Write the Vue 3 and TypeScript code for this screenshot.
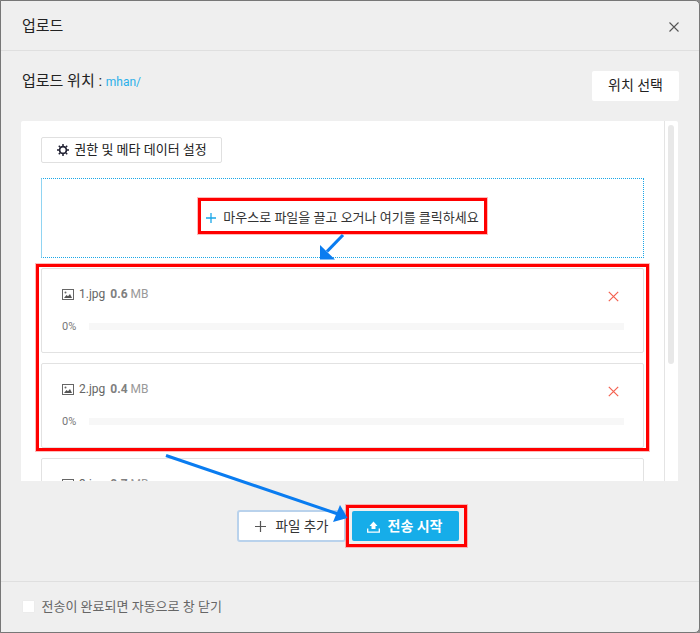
<script setup lang="ts">
interface UploadFile { name: string; size: string }
const files: UploadFile[] = [
  { name: '1.jpg', size: '0.6' },
  { name: '2.jpg', size: '0.4' },
  { name: '3.jpg', size: '0.7' },
]
</script>

<template>
  <div class="modal">
    <header class="head">
      <h1 class="title">업로드</h1>
      <svg class="close" width="12" height="12" viewBox="0 0 12 12"><path d="M1.500 1.500l9 9M10.500 1.500l-9 9" stroke="#555" stroke-width="1.100" fill="none" /></svg>
    </header>

    <div class="body">
      <div class="location">
        <div class="loc-text">업로드 위치 : <span class="path">mhan/</span></div>
        <button class="pick">위치 선택</button>
      </div>

      <div class="panel">
        <div class="scroll">
          <button class="settings">
            <svg width="14" height="14" viewBox="0 0 14 14"><circle cx="7" cy="7" r="3.400" fill="none" stroke="#223" stroke-width="1.700" /><path d="M7 1v2M7 11v2M1 7h2M11 7h2M2.800 2.800l1.400 1.400M9.800 9.800l1.400 1.400M11.200 2.800L9.800 4.200M4.200 9.800l-1.400 1.400" stroke="#223" stroke-width="1.500" /></svg>
            권한 및 메타 데이터 설정
          </button>

          <div class="drop">
            <svg width="10" height="10" viewBox="0 0 10 10"><path d="M5 0v10M0 5h10" stroke="#1aa7e8" stroke-width="1.300" /></svg>
            <span>마우스로 파일을 끌고 오거나 여기를 클릭하세요</span>
          </div>

          <div v-for="f in files" :key="f.name" class="item">
            <div class="item-top">
              <svg width="12" height="11" viewBox="0 0 12 11"><rect x="0.500" y="0.500" width="11" height="10" fill="none" stroke="#666" /><circle cx="3.500" cy="3.500" r="1" fill="#666" /><path d="M2 9l2.500-3 1.500 1.200L8 5l2 4z" fill="#555" /></svg>
              <span class="fname">{{ f.name }}</span>
              <span class="fsize"><b>{{ f.size }}</b> MB</span>
              <svg class="remove" width="11" height="11" viewBox="0 0 11 11"><path d="M.8.8l9.400 9.400M10.200.8L.8 10.200" stroke="#f4604f" stroke-width="1.200" fill="none" /></svg>
            </div>
            <div class="progress">
              <span class="pct">0%</span>
              <div class="bar"></div>
            </div>
          </div>
        </div>
        <div class="track"><div class="thumb"></div></div>
      </div>

      <div class="actions">
        <button class="add">
          <svg width="11" height="11" viewBox="0 0 11 11"><path d="M5.500 0v11M0 5.500h11" stroke="#555" stroke-width="1.200" /></svg>
          파일 추가
        </button>
        <button class="start">
          <svg width="13" height="13" viewBox="0 0 13 13"><path d="M6.500 1.500L10.500 6H8.500v3h-4V6H2.500z" fill="#fff" /><path d="M.7 8.500v3.600h11.600V8.500" fill="none" stroke="#fff" stroke-width="1.300" /></svg>
          전송 시작
        </button>
      </div>
    </div>

    <footer class="foot">
      <span class="check"></span>
      <span class="foot-text">전송이 완료되면 자동으로 창 닫기</span>
    </footer>

    <div class="mark mark-a"></div>
    <div class="mark mark-b"></div>
    <div class="mark mark-c"></div>
    <svg class="arrows" width="700" height="633" viewBox="0 0 700 633">
      <path d="M343 235L327 251.500" stroke="#0a7cf0" stroke-width="3.200" fill="none" />
      <path d="M320 259.500L320 245L335 259.500z" fill="#0a7cf0" />
      <path d="M166 455.500L338 514" stroke="#0a7cf0" stroke-width="3" fill="none" />
      <path d="M347.500 518L333 522L340 505z" fill="#0a7cf0" />
    </svg>
    <div class="edge"></div>
  </div>
</template>

<style>
html, body { margin: 0; padding: 0; background: #8a8a8a; }
</style>

<style scoped>
* { box-sizing: border-box; }
.modal {
  position: relative;
  width: 700px;
  height: 633px;
  background: #efefef;
  border: 1px solid #777;
  border-radius: 0 5px 5px 0;
  display: flex;
  flex-direction: column;
  overflow: hidden;
  color: #222;
  font-family: Roboto, "Noto Sans CJK KR", sans-serif;
  font-size: 12px;
}
.edge { position: absolute; left: -1px; top: 36px; width: 1px; height: 32px; background: #1d2a4a; }
.head {
  height: 50px;
  flex: none;
  border-bottom: 1px solid #dfdfdf;
  display: flex;
  align-items: center;
  justify-content: space-between;
  padding: 0 19px 0 21px;
}
.title { margin: 0 0 3px; font-size: 15px; font-weight: 400; color: #222; }
.close { margin-top: 2px; }
.body { flex: 1; min-height: 0; padding: 20px 20px 0; }
.location { display: flex; justify-content: space-between; align-items: flex-start; height: 50px; }
.loc-text { font-size: 15px; line-height: 20px; padding-left: 1px; }
.path { color: #2bb0ea; font-size: 12px; }
.pick {
  width: 87px;
  height: 30px;
  border: 0;
  border-radius: 2px;
  background: #fff;
  color: #222;
  font: inherit;
  font-size: 14px;
  padding: 0 0 4px;
}
.panel { display: flex; height: 360px; width: 657px; background: #fff; overflow: hidden; border-radius: 2px 2px 0 0; }
.scroll { width: 643px; flex: none; padding: 16px 20px 0; overflow: hidden; }
.settings {
  display: flex;
  align-items: center;
  justify-content: center;
  gap: 4px;
  width: 181px;
  height: 26px;
  padding: 0 0 4px;
  background: #fff;
  border: 1px solid #e0e0e0;
  border-radius: 2px;
  color: #222;
  font: inherit;
  font-size: 13px;
}
.settings svg { margin-top: 3px; }
.drop {
  height: 80px;
  margin-top: 15px;
  margin-bottom: 10px;
  border-top: 1px dotted #1aa7e8;
  border-right: 1px dotted #1aa7e8;
  border-bottom: 1px dotted #1aa7e8;
  border-left: 1px solid #90d4f2;
  display: flex;
  align-items: center;
  justify-content: center;
  gap: 7px;
  padding-bottom: 4px;
  font-size: 13px;
  color: #333;
}
.drop svg { margin-top: 4px; }
.item {
  height: 85px;
  margin-bottom: 10px;
  border: 1px solid #e2e2e2;
  border-radius: 2px;
  padding: 18px 19px 0 20px;
  color: #666;
}
.item-top { display: flex; align-items: center; height: 14px; position: relative; }
.fname { margin-left: 5px; }
.fsize { margin-left: 5px; color: #999; }
.fsize b { font-weight: 700; color: #808080; }
.remove { position: absolute; right: 5px; top: 4px; }
.progress { display: flex; align-items: center; margin-top: 18px; height: 14px; }
.pct { width: 27px; font-size: 11px; color: #777; }
.bar { flex: 1; height: 7px; background: #f7f7f7; margin-top: 1px; }
.track { flex: 1; border-left: 1px solid #e4e4e4; padding: 4px 3px 0 3px; }
.thumb { width: 6px; height: 239px; background: #e8e8e8; border-radius: 3px; }
.actions { display: flex; justify-content: center; gap: 6px; margin-top: 29px; padding-right: 4px; }
.add {
  width: 109px;
  height: 32px;
  background: #fff;
  border: 2px solid #b9d2ec;
  border-radius: 3px;
  display: flex;
  align-items: center;
  justify-content: center;
  gap: 9px;
  padding: 0 0 2px 1px;
  color: #333;
  font: inherit;
  font-size: 13.500px;
}
.add svg { margin-top: 2px; }
.start {
  width: 107px;
  height: 30px;
  margin-top: 1px;
  background: #16ade9;
  border: 0;
  border-radius: 2px;
  display: flex;
  align-items: center;
  justify-content: center;
  gap: 8px;
  padding: 0 2px 2px 0;
  color: #fff;
  font: inherit;
  font-size: 14px;
  font-weight: 700;
}
.start svg { margin-top: 2px; }
.foot {
  height: 51px;
  flex: none;
  border-top: 1px solid #dfdfdf;
  display: flex;
  align-items: center;
  gap: 7px;
  padding: 0 20px 0 20.500px;
  color: #666;
  font-size: 13px;
}
.foot-text { margin-bottom: 4px; }
.check { width: 13px; height: 13px; background: #fff; border: 1px solid #ececec; border-radius: 1px; margin-bottom: 2px; }
.mark { position: absolute; border: 3px solid #f00; box-shadow: 0 0 0 1px rgba(255, 120, 120, .5); pointer-events: none; }
.mark-a { left: 197px; top: 197px; width: 289px; height: 36px; }
.mark-b { left: 35px; top: 263px; width: 613px; height: 187px; }
.mark-c { left: 345px; top: 504px; width: 121px; height: 42px; }
.arrows { position: absolute; left: -1px; top: -1px; pointer-events: none; }
</style>
